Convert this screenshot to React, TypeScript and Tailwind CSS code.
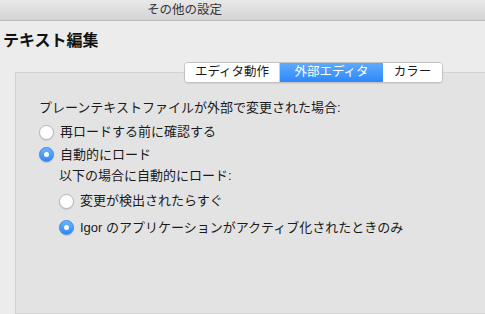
import type { ReactNode } from 'react'

const font = "font-['Liberation_Sans','Noto_Sans_CJK_JP',sans-serif]"

function Radio({ checked }: { checked?: boolean }) {
  if (checked) {
    return (
      <span className="flex h-[15px] w-[15px] shrink-0 items-center justify-center rounded-full border border-[#3a86ec] bg-gradient-to-b from-[#6cb4fb] to-[#2f87f8] shadow-[0_1px_1px_rgba(0,0,0,0.12)]">
        <span className="h-[5px] w-[5px] rounded-full bg-white" />
      </span>
    )
  }
  return (
    <span className="h-[15px] w-[15px] shrink-0 rounded-full border border-[#b5b5b5] bg-white shadow-[0_1px_1px_rgba(0,0,0,0.1)]" />
  )
}

function Option({ checked, label, className }: { checked?: boolean; label: ReactNode; className: string }) {
  return (
    <div className={`flex items-center gap-[6px] ${className}`}>
      <Radio checked={checked} />
      <span className="leading-[16px]">{label}</span>
    </div>
  )
}

function Segment({ label, active, className }: { label: string; active?: boolean; className: string }) {
  const look = active
    ? 'bg-gradient-to-b from-[#5eabfb] to-[#2e86fb] text-white'
    : 'bg-white text-[#1a1a1a]'
  return (
    <div className={`flex h-full items-center justify-center text-[12.5px] leading-none ${look} ${className}`}>
      {label}
    </div>
  )
}

export default function App() {
  return (
    <div className={`flex h-[314px] w-[485px] flex-col overflow-hidden bg-[#ececec] text-[#1a1a1a] ${font}`}>
      <div className="flex h-[21px] shrink-0 items-center border-b border-[#b9b9b9] bg-gradient-to-b from-[#e9e9e9] to-[#d4d4d4] pl-[147px] text-[12.5px] text-[#363636]">
        その他の設定
      </div>

      <h1 className="ml-[3px] mt-[10px] text-[16px] font-bold leading-[20px] text-[#111]">テキスト編集</h1>

      <div className="mt-[11px] flex flex-1 flex-col">
        <div className="relative z-10 ml-[184px] flex h-[21px] w-[259px] overflow-hidden rounded-[4px] border border-[#c2c2c2] bg-white shadow-[0_1px_1px_rgba(0,0,0,0.08)]">
          <Segment label="エディタ動作" className="w-[95px] border-r border-[#d0d0d0]" />
          <Segment label="外部エディタ" active className="w-[103px]" />
          <Segment label="カラー" className="flex-1" />
        </div>

        <div className="ml-[15px] -mt-[11px] -mr-[4px] flex-1 border border-[#d3d3d3] bg-[#e3e3e3] pl-[23px] pt-[23px] text-[13px]">
          <div className="flex h-[24px] items-center leading-[16px]">プレーンテキストファイルが外部で変更された場合:</div>
          <Option label="再ロードする前に確認する" className="h-[24px]" />
          <Option checked label="自動的にロード" className="h-[21px]" />
          <div className="flex h-[21px] items-center pl-[20px] leading-[16px]">以下の場合に自動的にロード:</div>
          <Option label="変更が検出されたらすぐ" className="h-[30px] pl-[20px]" />
          <Option checked label="Igor のアプリケーションがアクティブ化されたときのみ" className="h-[23px] pl-[20px]" />
        </div>
      </div>
    </div>
  )
}
